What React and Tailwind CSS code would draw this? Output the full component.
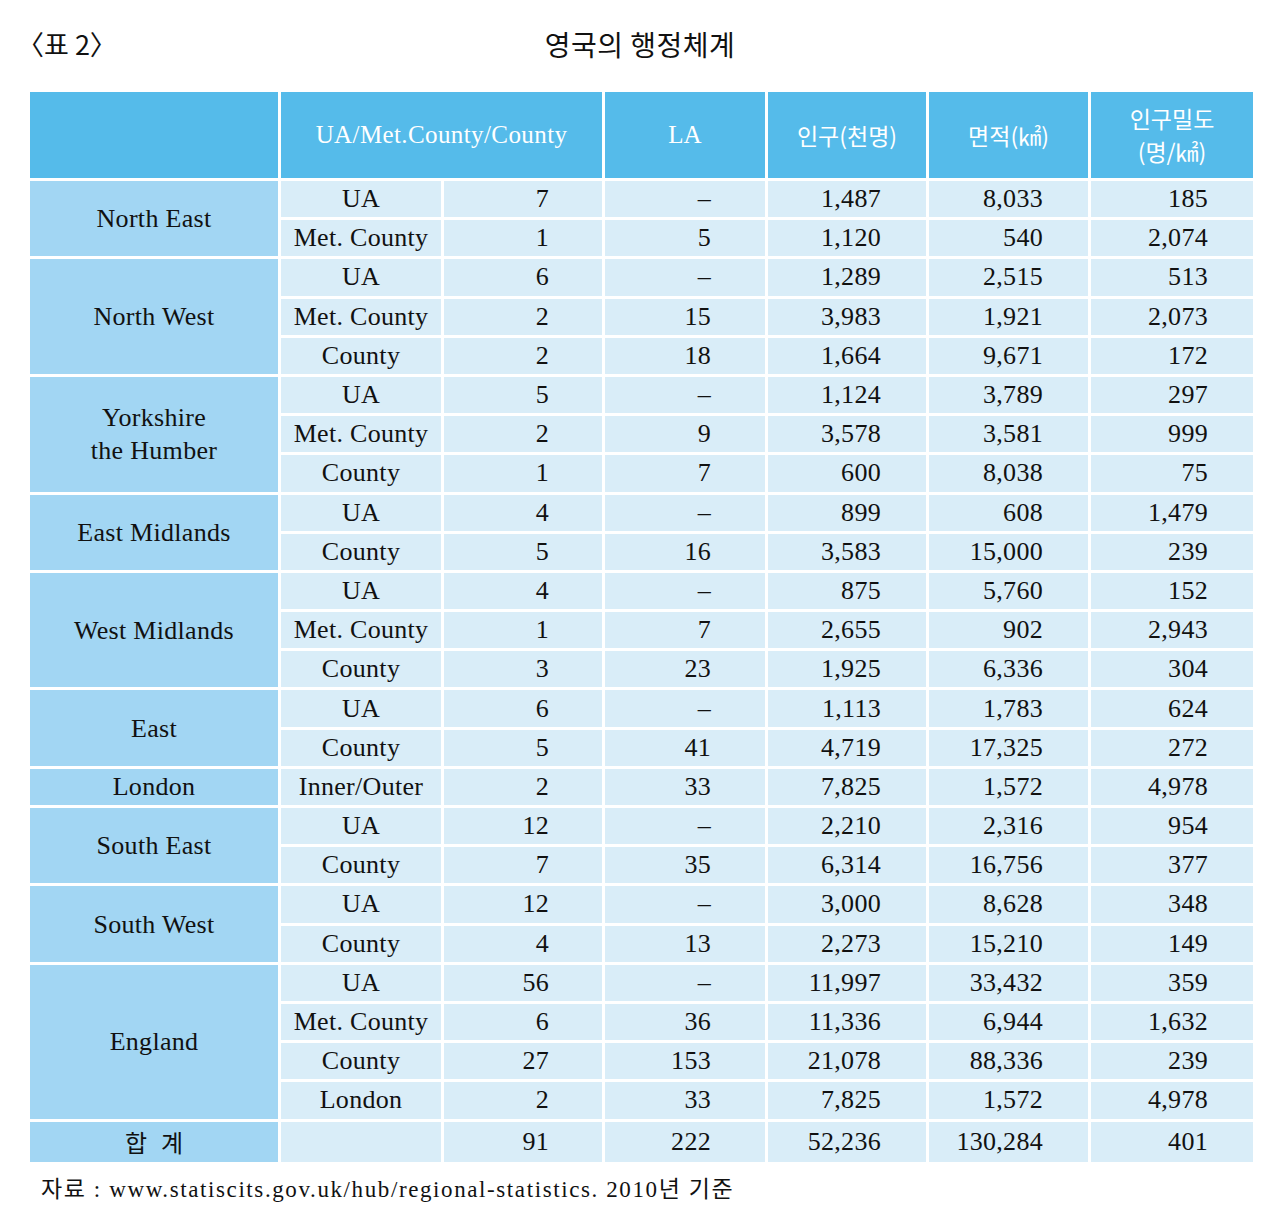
import React from 'react';

const groups = [
  {
    name: ['North East'],
    rows: [
      ['UA', '7', '–', '1,487', '8,033', '185'],
      ['Met. County', '1', '5', '1,120', '540', '2,074'],
    ],
  },
  {
    name: ['North West'],
    rows: [
      ['UA', '6', '–', '1,289', '2,515', '513'],
      ['Met. County', '2', '15', '3,983', '1,921', '2,073'],
      ['County', '2', '18', '1,664', '9,671', '172'],
    ],
  },
  {
    name: ['Yorkshire', 'the Humber'],
    rows: [
      ['UA', '5', '–', '1,124', '3,789', '297'],
      ['Met. County', '2', '9', '3,578', '3,581', '999'],
      ['County', '1', '7', '600', '8,038', '75'],
    ],
  },
  {
    name: ['East Midlands'],
    rows: [
      ['UA', '4', '–', '899', '608', '1,479'],
      ['County', '5', '16', '3,583', '15,000', '239'],
    ],
  },
  {
    name: ['West Midlands'],
    rows: [
      ['UA', '4', '–', '875', '5,760', '152'],
      ['Met. County', '1', '7', '2,655', '902', '2,943'],
      ['County', '3', '23', '1,925', '6,336', '304'],
    ],
  },
  {
    name: ['East'],
    rows: [
      ['UA', '6', '–', '1,113', '1,783', '624'],
      ['County', '5', '41', '4,719', '17,325', '272'],
    ],
  },
  {
    name: ['London'],
    rows: [['Inner/Outer', '2', '33', '7,825', '1,572', '4,978']],
  },
  {
    name: ['South East'],
    rows: [
      ['UA', '12', '–', '2,210', '2,316', '954'],
      ['County', '7', '35', '6,314', '16,756', '377'],
    ],
  },
  {
    name: ['South West'],
    rows: [
      ['UA', '12', '–', '3,000', '8,628', '348'],
      ['County', '4', '13', '2,273', '15,210', '149'],
    ],
  },
  {
    name: ['England'],
    rows: [
      ['UA', '56', '–', '11,997', '33,432', '359'],
      ['Met. County', '6', '36', '11,336', '6,944', '1,632'],
      ['County', '27', '153', '21,078', '88,336', '239'],
      ['London', '2', '33', '7,825', '1,572', '4,978'],
    ],
  },
];

const serif = "font-['Liberation_Serif','Noto_Sans_CJK_KR',serif]";
const sans = "font-['Noto_Sans_CJK_KR','Liberation_Sans',sans-serif]";

const data = 'bg-[#d9edf8] h-[36.2px] p-0 text-[26px] leading-none tracking-[0.3px]';

const App = () => {
  return (
    <div className={`w-[1280px] h-[1230px] bg-white text-[#111] ${serif}`}>
      {/* 제목 */}
      <div className="relative h-[89px]">
        <div className={`${sans} absolute left-[17px] top-[26px] text-[27px] leading-[36px] whitespace-pre`}>
          〈표 2〉
        </div>
        <div className={`${sans} pt-[26px] text-center text-[28px] leading-[36px] tracking-[0.5px]`}>
          영국의 행정체계
        </div>
      </div>

      {/* 표 */}
      <table className="ml-[27px] w-[1229px] table-fixed border-separate border-spacing-[3px]">
        <colgroup>
          <col className="w-[248px]" />
          <col className="w-[160px]" />
          <col className="w-[158px]" />
          <col className="w-[160px]" />
          <col className="w-[158px]" />
          <col className="w-[159px]" />
          <col className="w-[162px]" />
        </colgroup>
        <thead>
          <tr className="h-[86px] bg-[#55bbea] text-white text-[25px] font-normal">
            <th className="bg-[#55bbea]" />
            <th colSpan={2} className="font-normal tracking-[0.4px]">UA/Met.County/County</th>
            <th className="font-normal">LA</th>
            <th className={`font-normal ${sans} text-[23px]`}>인구(천명)</th>
            <th className={`font-normal ${sans} text-[23px]`}>면적(㎢)</th>
            <th className={`font-normal ${sans} text-[23px] leading-[33px]`}>
              인구밀도
              <br />
              (명/㎢)
            </th>
          </tr>
        </thead>
        <tbody>
          {groups.map((g) =>
            g.rows.map((r, i) => (
              <tr key={g.name[0] + i}>
                {i === 0 && (
                  <td
                    rowSpan={g.rows.length}
                    className="bg-[#a2d6f3] text-center text-[26px] leading-[33px] tracking-[0.3px] p-0"
                  >
                    {g.name.map((n) => (
                      <div key={n}>{n}</div>
                    ))}
                  </td>
                )}
                <td className={`${data} text-center`}>{r[0]}</td>
                <td className={`${data} text-right pr-[53px]`}>{r[1]}</td>
                <td className={`${data} text-right pr-[54px]`}>{r[2]}</td>
                <td className={`${data} text-right pr-[45px]`}>{r[3]}</td>
                <td className={`${data} text-right pr-[45px]`}>{r[4]}</td>
                <td className={`${data} text-right pr-[45px]`}>{r[5]}</td>
              </tr>
            ))
          )}
          <tr>
            <td className={`bg-[#a2d6f3] h-[40px] text-center text-[24px] ${sans} tracking-[14px] pl-[14px]`}>
              합계
            </td>
            <td className="bg-[#d9edf8] h-[40px]" />
            <td className={`${data} h-[40px] text-right pr-[53px]`}>91</td>
            <td className={`${data} h-[40px] text-right pr-[54px]`}>222</td>
            <td className={`${data} h-[40px] text-right pr-[45px]`}>52,236</td>
            <td className={`${data} h-[40px] text-right pr-[45px]`}>130,284</td>
            <td className={`${data} h-[40px] text-right pr-[45px]`}>401</td>
          </tr>
        </tbody>
      </table>

      {/* 출처 */}
      <div className="pl-[41px] pt-[10px] text-[23px] leading-[30px] tracking-[1.6px]">
        자료 : www.statiscits.gov.uk/hub/regional-statistics. 2010년 기준
      </div>
    </div>
  );
};

export default App;
